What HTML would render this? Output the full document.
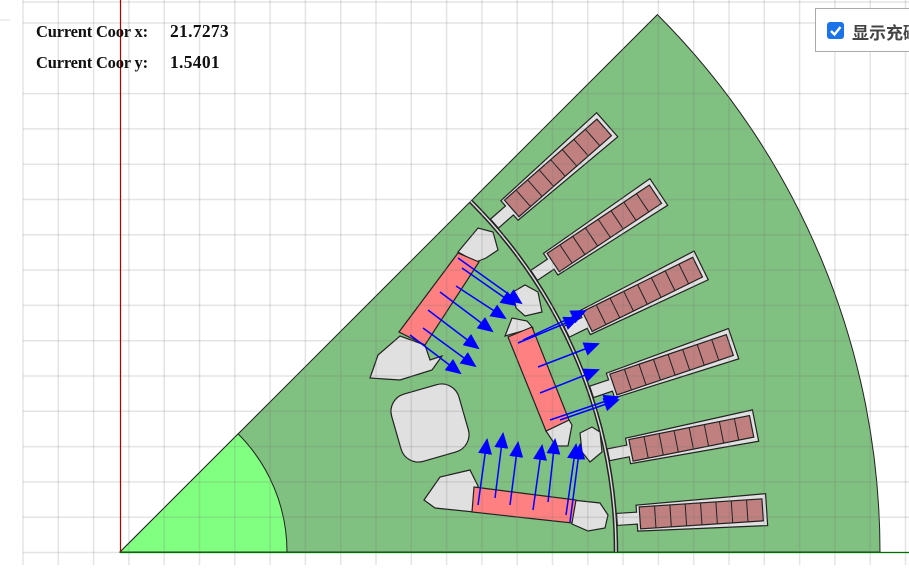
<!DOCTYPE html>
<html><head><meta charset="utf-8"><style>
html,body{margin:0;padding:0;background:#fff;width:909px;height:573px;overflow:hidden}
.t{position:absolute;font:bold 16.5px "Liberation Serif",serif;color:#111;white-space:pre;letter-spacing:-0.2px}
.v{font-size:17.5px;letter-spacing:0.3px}
.cb{position:absolute;left:815px;top:8px;width:120px;height:44px;border:1px solid #aaa;background:#fff;box-sizing:border-box}
.cb .b{position:absolute;left:11px;top:13px;width:17px;height:17px;background:#1a73e8;border-radius:3px}
.cb span{position:absolute;left:36px;top:10px;font:bold 17px "Liberation Sans","Noto Sans CJK SC",sans-serif;color:#444}
</style></head><body>
<svg width="909" height="573" style="position:absolute;left:0;top:0">
<defs>
<marker id="ah" markerUnits="userSpaceOnUse" markerWidth="16" markerHeight="14" refX="14" refY="7" orient="auto"><path d="M0,0 L16,7 L0,14 Z" fill="#0000ff"/></marker>
<g id="slot">
<path d="M618,546 L638,546 L638,539 L768,536 L768,568 L638,565 L638,558 L618,558 Z" fill="#e0e0e0" stroke="#222" stroke-width="1.2"/>
<rect x="641" y="541" width="123" height="22" fill="#c08080" stroke="#222" stroke-width="1.2"/>
<path d="M656.4,541v22M671.8,541v22M687.1,541v22M702.5,541v22M717.9,541v22M733.3,541v22M748.6,541v22" stroke="#222" stroke-width="1"/>
</g>
</defs>
<path d="M120,552 L657.4,14.6 A760,760 0 0 1 880,552 Z" fill="#80c080" stroke="#222" stroke-width="1"/>
<path d="M120,552 L238.1,433.9 A167,167 0 0 1 287,552 Z" fill="#80ff80" stroke="#222" stroke-width="1"/>
<g>
<use href="#slot" transform="rotate(-3.75 120 552)"/>
<use href="#slot" transform="rotate(-11.25 120 552)"/>
<use href="#slot" transform="rotate(-18.75 120 552)"/>
<use href="#slot" transform="rotate(-26.25 120 552)"/>
<use href="#slot" transform="rotate(-33.75 120 552)"/>
<use href="#slot" transform="rotate(-41.25 120 552)"/>
</g>
<path d="M470.7,201.3 A496,496 0 0 1 616,552" fill="none" stroke="#222" stroke-width="4.5"/>
<path d="M470.7,201.3 A496,496 0 0 1 616,552" fill="none" stroke="#ddd" stroke-width="1.5"/>
<path d="M424,500 L440,477 L470,470 L478,486 L474,512 L435,508 Z" fill="#e0e0e0" stroke="#222" stroke-width="1.2"/>
<path d="M572,500 L600,503 L608,515 L605,528 L588,531 L572,524 Z" fill="#e0e0e0" stroke="#222" stroke-width="1.2"/>
<rect x="395" y="388" width="70" height="70" rx="18" fill="#e0e0e0" stroke="#222" stroke-width="1.2" transform="rotate(-16 430 423)"/>
<path d="M505,336 L512,318 L527,321 L533,328 Z" fill="#e0e0e0" stroke="#222" stroke-width="1.2"/>
<path d="M546,431 L556,446 L568,446 L572,425 L569,420 Z" fill="#e0e0e0" stroke="#222" stroke-width="1.2"/>
<path d="M370,378 L378,355 L400,336 L425,345 L430,360 L442,356 L432,370 L400,380 Z" fill="#e0e0e0" stroke="#222" stroke-width="1.2"/>
<path d="M458,252 L478,228 L493,232 L498,250 L486,258 L476,262 Z" fill="#e0e0e0" stroke="#222" stroke-width="1.2"/>
<path d="M513,292 L525,285 L538,292 L542,312 L525,316 L516,308 Z" fill="#e0e0e0" stroke="#222" stroke-width="1.2"/>
<path d="M580,433 L592,427 L600,432 L602,452 L590,462 L582,452 Z" fill="#e0e0e0" stroke="#222" stroke-width="1.2"/>
<polygon points="474,487 576,500 572,523 472,512" fill="#ff8080" stroke="#222" stroke-width="1.2"/>
<polygon points="508,337 532,327 569,420 546,431" fill="#ff8080" stroke="#222" stroke-width="1.2"/>
<polygon points="399,332 458,253 479,262 425,345" fill="#ff8080" stroke="#222" stroke-width="1.2"/>
<g stroke="rgba(120,120,120,0.2)" stroke-width="1.5">
<path d="M23,0V565M58.3,0V565M93.6,0V565M128.9,0V565M164.2,0V565M199.5,0V565M234.8,0V565M270.1,0V565M305.4,0V565M340.7,0V565M376,0V565M411.3,0V565M446.6,0V565M481.9,0V565M517.2,0V565M552.5,0V565M587.8,0V565M623.1,0V565M658.4,0V565M693.7,0V565M729,0V565M764.3,0V565M799.6,0V565M834.9,0V565M870.2,0V565M905.5,0V565"/>
<path d="M23,2H909M23,23H909M23,93.6H909M23,128.9H909M23,164.2H909M23,199.5H909M23,234.8H909M23,270.1H909M23,305.4H909M23,340.7H909M23,376H909M23,411.3H909M23,446.6H909M23,481.9H909M23,517.2H909M23,552.5H909"/>
</g>
<path d="M0,20H10" stroke="#ddd"/>
<line x1="120.5" y1="0" x2="120.5" y2="552" stroke="#b00000" stroke-width="1.2"/>
<line x1="120" y1="552.5" x2="909" y2="552.5" stroke="#007000" stroke-width="1.2"/>
<g stroke="#0000ff" stroke-width="1.5" marker-end="url(#ah)">
<line x1="458" y1="258" x2="521" y2="303"/>
<line x1="462" y1="268" x2="515" y2="305"/>
<line x1="456" y1="286" x2="505" y2="318"/>
<line x1="440" y1="292" x2="492" y2="331"/>
<line x1="428" y1="310" x2="478" y2="348"/>
<line x1="423" y1="328" x2="475" y2="366"/>
<line x1="410" y1="335" x2="460" y2="373"/>
<line x1="523" y1="340" x2="585" y2="311"/>
<line x1="518" y1="343" x2="578" y2="318"/>
<line x1="538" y1="367" x2="598" y2="344"/>
<line x1="540" y1="393" x2="598" y2="370"/>
<line x1="550" y1="420" x2="618" y2="397"/>
<line x1="560" y1="420" x2="618" y2="400"/>
<line x1="478" y1="505" x2="487" y2="440"/>
<line x1="495" y1="498" x2="503" y2="434"/>
<line x1="510" y1="505" x2="518" y2="443"/>
<line x1="533" y1="510" x2="542" y2="446"/>
<line x1="548" y1="502" x2="555" y2="440"/>
<line x1="566" y1="515" x2="576" y2="445"/>
<line x1="570" y1="522" x2="580" y2="445"/>
</g>
<rect x="0" y="565" width="909" height="8" fill="#fff"/>
</svg>
<div class="t" style="left:36px;top:22px">Current Coor x:</div>
<div class="t v" style="left:170px;top:21px">21.7273</div>
<div class="t" style="left:36px;top:53px">Current Coor y:</div>
<div class="t v" style="left:170px;top:52px">1.5401</div>
<div class="cb"><div class="b"><svg width="17" height="17"><path d="M4,9 L7.5,12.5 L13.5,5" fill="none" stroke="#fff" stroke-width="2.4"/></svg></div><span>显示充磁</span></div>
</body></html>
